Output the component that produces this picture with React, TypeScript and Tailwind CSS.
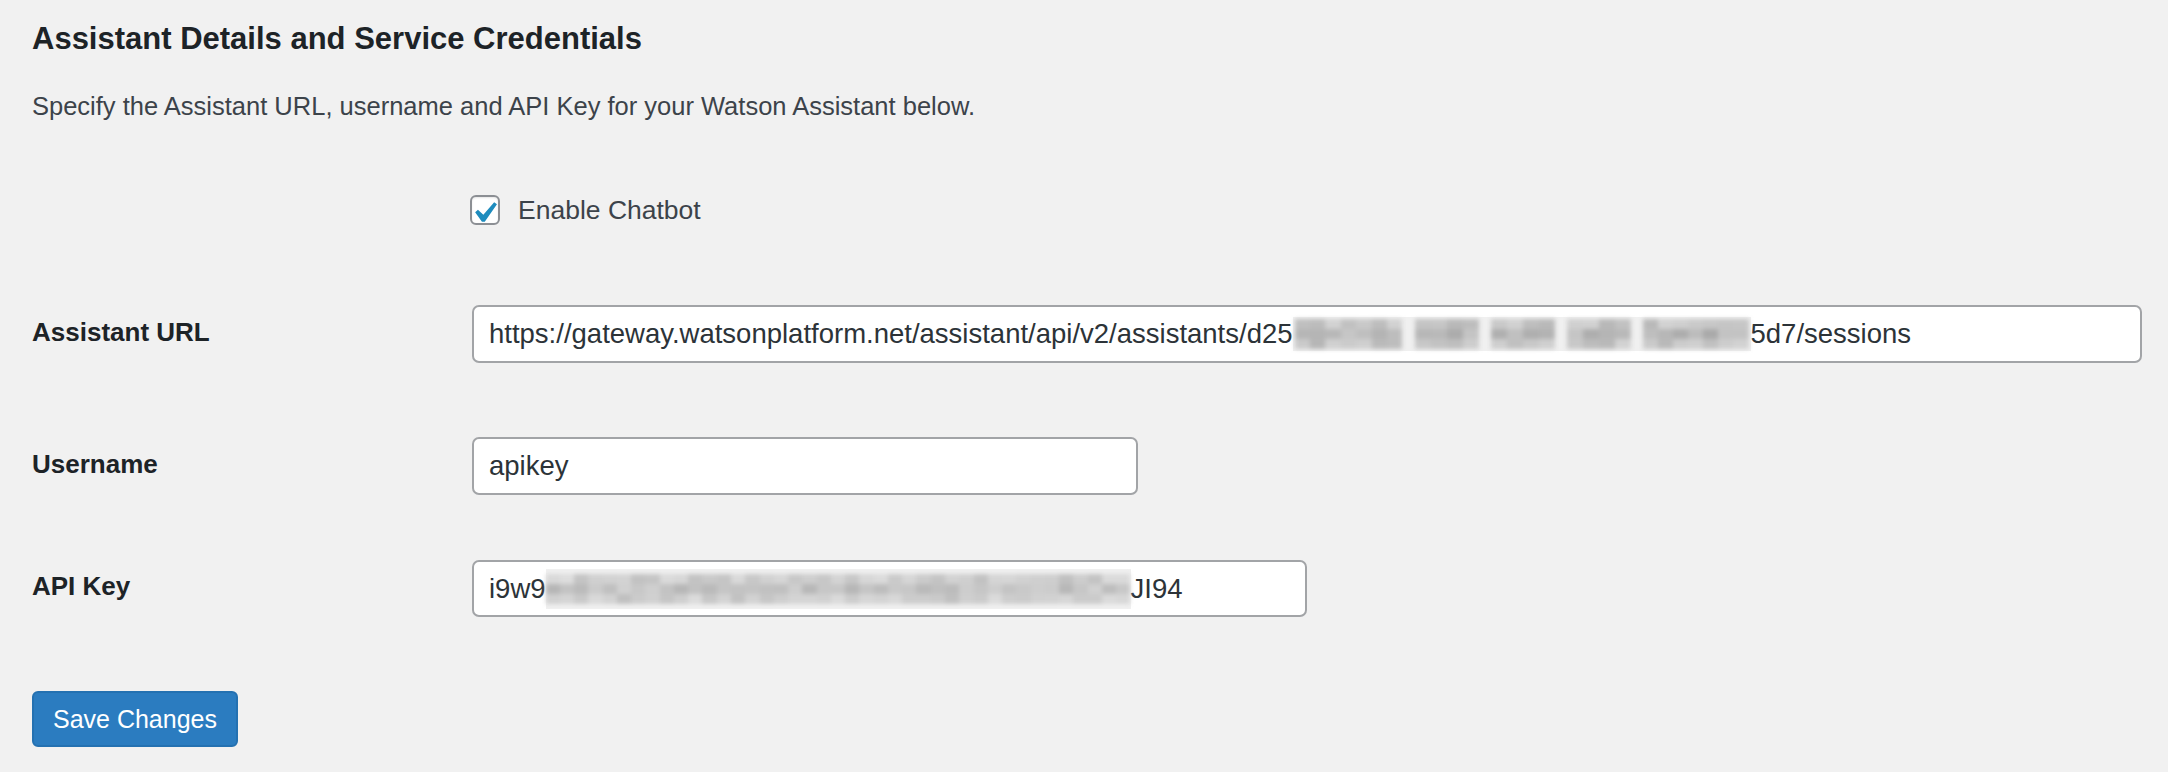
import React from "react";

const FONT = { fontFamily: '"Liberation Sans", Arial, sans-serif' };

function rand(seed: number) {
  let s = seed;
  return () => {
    s = (s * 9301 + 49297) % 233280;
    return s / 233280;
  };
}

function Mosaic({ width, seed, base }: { width: number; seed: number; base: number }) {
  const r = rand(seed);
  const cols = Math.floor(width / 14);
  const rows = 3;
  const cells: number[][] = [];
  for (let y = 0; y < rows; y++) {
    const row: number[] = [];
    for (let x = 0; x < cols; x++) {
      const v = base + Math.floor(r() * 30) - (y === 1 ? 12 : 0);
      row.push(Math.max(160, Math.min(235, v)));
    }
    cells.push(row);
  }
  return (
    <div className="flex flex-col blur-[2px]" style={{ width }}>
      {cells.map((row, i) => (
        <div key={i} className="flex h-[10px]">
          {row.map((v, j) => (
            <div
              key={j}
              className="flex-1"
              style={{ backgroundColor: `rgb(${v},${v},${v})` }}
            />
          ))}
        </div>
      ))}
    </div>
  );
}

function UrlBlur() {
  const segs = [
    { w: 108, seed: 3 },
    { w: 64, seed: 7 },
    { w: 64, seed: 11 },
    { w: 64, seed: 17 },
    { w: 106, seed: 23 },
  ];
  return (
    <div className="flex items-center gap-[12px] bg-[#f0f0f0] h-[34px] px-[2px]">
      {segs.map((s, i) => (
        <Mosaic key={i} width={s.w} seed={s.seed} base={182} />
      ))}
    </div>
  );
}

function CheckIcon() {
  return (
    <svg viewBox="0 0 20 20" className="w-[42px] h-[42px] absolute -left-[9px] -top-[5px]">
      <path d="M14.83 4.89l1.34.94-5.81 8.38H9.02L5.78 9.67l1.34-1.25 2.57 2.4z" fill="#1e8cbe" />
    </svg>
  );
}

export default function App() {
  return (
    <div className="w-[2168px] h-[772px] bg-[#f1f1f1] overflow-hidden" style={FONT}>
      <div className="flex flex-col pl-[32px] pr-[26px]">
        <h2 className="mt-[19px] h-[40px] leading-[40px] text-[31px] font-bold text-[#1d2327]">
          Assistant Details and Service Credentials
        </h2>
        <p className="mt-[29px] h-[36px] leading-[36px] text-[25.5px] text-[#3c434a]">
          Specify the Assistant URL, username and API Key for your Watson Assistant below.
        </p>

        <div className="mt-[71px] flex items-center h-[30px]">
          <div className="w-[438px] shrink-0" />
          <div className="relative w-[30px] h-[30px] border-2 border-[#8c8f94] rounded-[6px] bg-white shadow-[inset_0_1px_2px_rgba(0,0,0,0.1)]">
            <CheckIcon />
          </div>
          <span className="ml-[18px] text-[26.5px] text-[#3c434a] leading-none">Enable Chatbot</span>
        </div>

        <div className="mt-[80px] flex items-center h-[58px]">
          <label className="w-[440px] shrink-0 text-[26px] font-bold text-[#1d2327] -mt-[4px]">
            Assistant URL
          </label>
          <div className="flex-1 h-[58px] flex items-center bg-white border-2 border-[#a2a4a7] rounded-[7px] pl-[15px] text-[27.5px] text-[#2c3338] whitespace-nowrap">
            <span>https://gateway.watsonplatform.net/assistant/api/v2/assistants/d25</span>
            <UrlBlur />
            <span>5d7/sessions</span>
          </div>
        </div>

        <div className="mt-[74px] flex items-center h-[58px]">
          <label className="w-[440px] shrink-0 text-[26px] font-bold text-[#1d2327] -mt-[4px]">
            Username
          </label>
          <div className="w-[666px] h-[58px] flex items-center bg-white border-2 border-[#a2a4a7] rounded-[7px] pl-[15px] text-[27.5px] text-[#2c3338]">
            apikey
          </div>
        </div>

        <div className="mt-[65px] flex items-center h-[57px]">
          <label className="w-[440px] shrink-0 text-[26px] font-bold text-[#1d2327] -mt-[4px]">
            API Key
          </label>
          <div className="w-[835px] h-[57px] flex items-center bg-white border-2 border-[#a2a4a7] rounded-[7px] pl-[15px] text-[27.5px] text-[#2c3338] whitespace-nowrap">
            <span>i9w9</span>
            <div className="bg-[#f0f0f0] h-[40px] flex items-center">
              <Mosaic width={585} seed={41} base={192} />
            </div>
            <span>JI94</span>
          </div>
        </div>

        <div className="mt-[74px]">
          <button className="h-[56px] w-[206px] bg-[#2b7cc0] border-2 border-[#2471b1] rounded-[6px] text-white text-[25px] leading-none">
            Save Changes
          </button>
        </div>
      </div>
    </div>
  );
}
